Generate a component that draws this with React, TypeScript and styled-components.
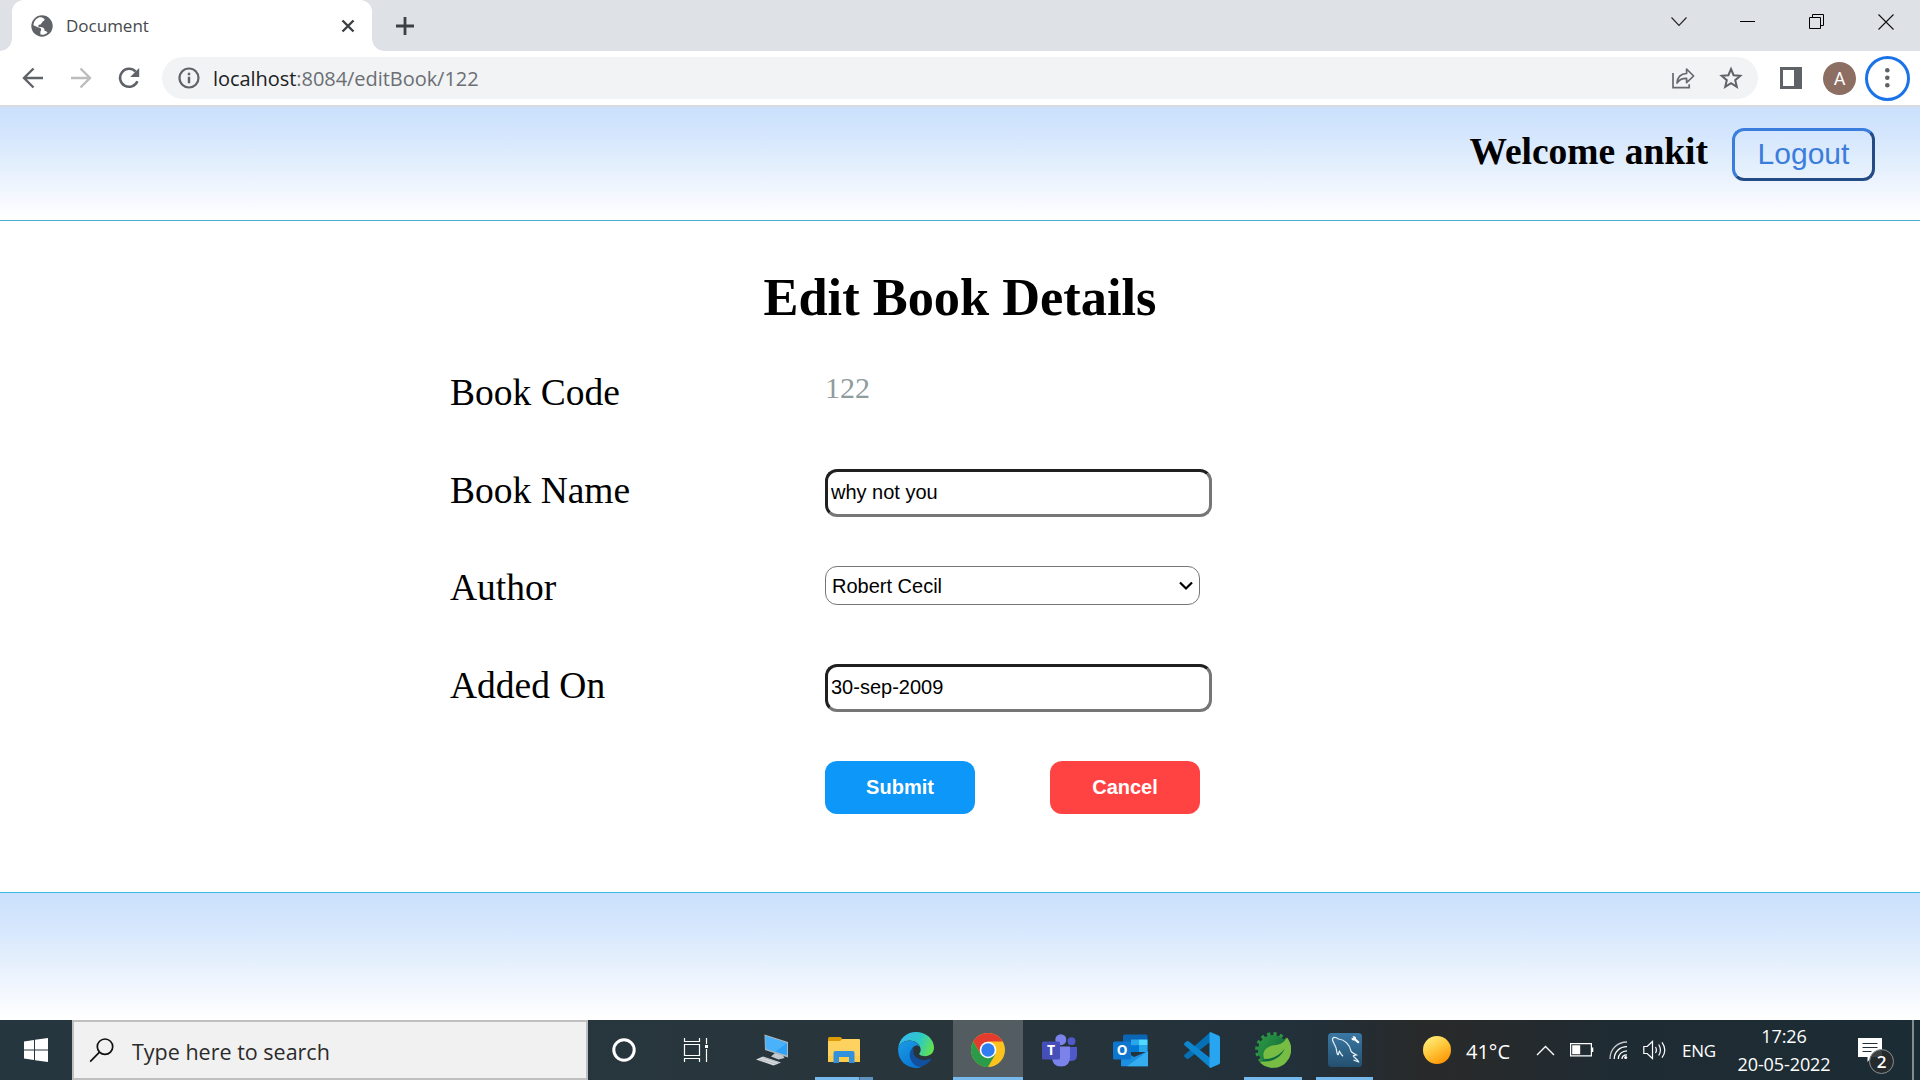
import React from "react";
import styled, { createGlobalStyle, css } from "styled-components";

const ui = `"Open Sans", "Noto Sans", sans-serif`;
const arial = `"Liberation Sans", Arial, sans-serif`;
const times = `"Liberation Serif", "Times New Roman", serif`;

const GlobalStyle = createGlobalStyle`
  *, *::before, *::after { box-sizing: border-box; }
  body { margin: 0; background: #fff; overflow: hidden; }
  svg { display: block; flex: none; }
`;

const Screen = styled.div`
  width: 1920px;
  height: 1080px;
  display: flex;
  flex-direction: column;
  overflow: hidden;
`;

/* ---------- browser chrome ---------- */
const TabStrip = styled.div`
  height: 51px;
  display: flex;
  justify-content: space-between;
  background: #dee1e6;
`;
const TabSide = styled.div`
  display: flex;
  align-items: center;
`;
const Tab = styled.div`
  position: relative;
  width: 360px;
  height: 51px;
  margin-left: 12px;
  padding: 0 17px 0 19px;
  display: flex;
  align-items: center;
  background: #fff;
  border-radius: 12px 12px 0 0;
  &::before, &::after {
    content: "";
    position: absolute;
    bottom: 0;
    width: 12px;
    height: 12px;
  }
  &::before { left: -12px; background: radial-gradient(circle at 0 0, transparent 11.5px, #fff 12px); }
  &::after { right: -12px; background: radial-gradient(circle at 100% 0, transparent 11.5px, #fff 12px); }
`;
const TabTitle = styled.span`
  flex: 1;
  margin-left: 13px;
  font: 17px/24px ${ui};
  color: #45494d;
`;
const NewTab = styled.div`
  margin-left: 24px;
`;
const WindowButtons = styled.div`
  display: flex;
  height: 43px;
`;
const WindowButton = styled.div`
  width: 69px;
  display: flex;
  align-items: center;
  justify-content: center;
`;
const Toolbar = styled.div`
  height: 56px;
  padding: 0 9px 0 21px;
  display: flex;
  align-items: center;
  background: #fff;
  border-bottom: 2px solid #dadbdd;
`;
const NavButtons = styled.div`
  display: flex;
  gap: 24px;
`;
const Omnibox = styled.div`
  width: 1596px;
  height: 42px;
  margin-left: 21px;
  padding: 0 15px 0 16px;
  display: flex;
  align-items: center;
  border-radius: 21px;
  background: #f1f3f4;
`;
const Url = styled.span`
  flex: 1;
  margin-left: 13px;
  padding-top: 1px;
  font: 20px/28px ${ui};
  letter-spacing: -0.05px;
  color: #6b6f74;
  b { font-weight: 400; color: #202124; }
`;
const OmniActions = styled.div`
  display: flex;
  align-items: center;
  gap: 24px;
`;
const Avatar = styled.div`
  width: 33px;
  height: 33px;
  margin-left: 21px;
  border-radius: 50%;
  background: #8d6e63;
  color: #fff;
  font: 18px/34px Roboto, sans-serif;
  text-align: center;
`;
const MenuButton = styled.div`
  width: 45px;
  height: 45px;
  margin-left: 9px;
  border: 3px solid #1a73e8;
  border-radius: 50%;
  display: grid;
  place-items: center;
`;
const PanelSlot = styled.div`
  margin-left: 22px;
`;

/* ---------- web page ---------- */
const fade = css`
  background: linear-gradient(#cae0fc, #d6e7fd 27%, #e3effc 52%, #eff5fe 70%, #fff);
`;
const PageHeader = styled.header`
  height: 114px;
  padding: 21px 45px 0 0;
  display: flex;
  justify-content: flex-end;
  align-items: flex-start;
  gap: 24px;
  border-bottom: 1px solid #4aabd2;
  ${fade}
`;
const Welcome = styled.div`
  margin-top: 2px;
  font: bold 37.5px/43px ${times};
  color: #000;
`;
const Logout = styled.button`
  width: 143px;
  height: 53px;
  padding: 0 0 2px;
  border: 3px solid;
  border-color: #3b7ddd #234b85 #234b85 #3b7ddd;
  border-radius: 12px;
  background: transparent;
  font: 30px/44px ${arial};
  color: #3b7ddd;
`;
const Main = styled.main`
  height: 671px;
  padding-top: 46px;
  background: #fff;
`;
const Title = styled.h1`
  margin: 0;
  font: bold 52.4px/60px ${times};
  text-align: center;
  color: #000;
`;
const Form = styled.div`
  margin: 44px 0 0 450px;
  display: grid;
  grid-template-columns: 375px 387px;
  grid-auto-rows: 97.5px;
  align-items: start;
`;
const Label = styled.label`
  font: 37.5px/43px ${times};
  color: #000;
`;
const Code = styled.span`
  font: 30px/34px ${times};
  color: #8f9c9e;
`;
const TextInput = styled.input`
  width: 387px;
  height: 48px;
  padding: 0 3px;
  border: 3px solid;
  border-color: #202020 #767676 #767676 #202020;
  border-radius: 12px;
  background: #fff;
  font: 20px ${arial};
  color: #000;
  outline: 0;
`;
const SelectBox = styled.div`
  width: 375px;
  height: 39px;
  padding: 1px 6px 0 6px;
  display: flex;
  align-items: center;
  justify-content: space-between;
  border: 1px solid #767676;
  border-radius: 12px;
  font: 20px ${arial};
  color: #000;
`;
const Actions = styled.div`
  grid-column: 2;
  display: flex;
  gap: 75px;
`;
const ActionButton = styled.button<{ $color: string }>`
  width: 150px;
  height: 53px;
  padding: 0;
  border: 0;
  border-radius: 12px;
  background: ${(p) => p.$color};
  color: #fff;
  font: bold 20px ${arial};
`;
const PageFooter = styled.footer`
  height: 128px;
  border-top: 1px solid #3dbbe8;
  ${fade}
`;

/* ---------- taskbar ---------- */
const Taskbar = styled.div`
  height: 60px;
  display: flex;
  background: linear-gradient(90deg, #26363f, #28353b 50%, #22303a 68%, #282a2a 74%, #272a2b 77%, #1f2b33 84%, #1c2c34);
  color: #fff;
`;
const Slot = styled.div<{ $w: number; $active?: boolean }>`
  position: relative;
  width: ${(p) => p.$w}px;
  display: flex;
  align-items: center;
  justify-content: center;
  ${(p) => p.$active && css`
    background: #535d61;
    margin: 0 1px;
    border-bottom: 3px solid #76b9ed;
    padding-top: 3px;
  `}
`;
const Running = styled.i<{ $stacked?: boolean }>`
  position: absolute;
  bottom: 0;
  left: 7px;
  right: 7px;
  height: 3px;
  background: ${(p) => (p.$stacked ? "linear-gradient(90deg, #76b9ed 44px, #476c88 44px, #476c88 45px, #5f93bd 45px)" : "#76b9ed")};
`;
const SearchBox = styled.div`
  width: 516px;
  padding-left: 15px;
  display: flex;
  align-items: center;
  border: 2px solid #bfbfbf;
  background: #f1f1f1;
  color: #2b2b2b;
  font: 21.5px/30px ${ui};
`;
const SearchText = styled.span`
  margin: 3px 0 0 18px;
`;
const Apps = styled.div`
  display: flex;
  width: 644px;
  margin-left: 4px;
`;
const Tray = styled.div`
  flex: 1;
  display: flex;
  align-items: center;
  padding-left: 43px;
`;
const Temp = styled.span`
  width: 70px;
  margin: 4px 0 0 15px;
  font: 20px/28px ${ui};
`;
const TrayIcons = styled.div`
  display: flex;
  align-items: center;
  gap: 15px;
`;
const Lang = styled.span`
  width: 52px;
  margin: 1px 0 0 15px;
  font: 17px/24px ${ui};
  letter-spacing: -0.3px;
`;
const Clock = styled.div`
  width: 100px;
  display: flex;
  flex-direction: column;
  align-items: center;
  font: 18px/28px ${ui};
  letter-spacing: -0.1px;
`;
const Notice = styled.div`
  position: relative;
  margin-left: 24px;
  width: 37px;
  height: 24px;
`;
const Badge = styled.span`
  position: absolute;
  left: 11px;
  top: 11px;
  width: 25px;
  height: 25px;
  border: 1px solid #8b9093;
  border-radius: 50%;
  background: rgba(40, 42, 44, 0.9);
  font: 600 17px/23px ${ui};
  text-align: center;
`;
const PeekEdge = styled.div`
  width: 2px;
  height: 60px;
  margin-left: 17px;
  background: #858c90;
`;

const Globe = () => (
  <svg width="22" height="22" viewBox="0 0 22 22">
    <circle cx="11" cy="11" r="10.7" fill="#5f6368" />
    <path d="M7.200 2.800C4.500 4.200 2.600 7 2.400 10.200l4.400 2.100c1.400.5 2.600.2 3.200 1.600.3.9 0 1.800-.6 2.700v3c2.700.5 5.300-.3 7.100-1.900-.6-1.200-1.700-1.700-3-1.900.2-1.800-.6-3.300-2.500-3.600-1.700-.2-3.600.2-3.800-1.200-.1-1.200 1.600-1.400 2.700-1.700 1.500-.4 1.300-1.800 2.400-2.300 1.100-.5 1.700-1.300 1.300-2.800C11.500 2.200 9.200 2 7.200 2.800z" fill="#fff" />
    <path d="M14 4.300c-.2 1.200-1.100 1.600-2.200 2.200-.8.5-.7 1.800-1.900 2.200 1.800 1.700 4.300.4 6.200 2.100.9.900 1 2 .9 3.200l2.600-.5C20.700 9.300 18.600 5.300 14 4.300z" fill="#5f6368" />
  </svg>
);
const Stroke = ({ w, h, d, color = "#5f6368", sw = 2.4 }: { w: number; h: number; d: string; color?: string; sw?: number }) => (
  <svg width={w} height={h} viewBox={`0 0 ${w} ${h}`} fill="none" stroke={color} strokeWidth={sw}>
    <path d={d} />
  </svg>
);
const Reload = () => (
  <svg width="24" height="24" viewBox="0 0 24 24">
    <path d="M20.400 15.200A9 9 0 1 1 18.600 5.600" fill="none" stroke="#5f6368" strokeWidth="2.5" />
    <path d="M22.200 2v9h-9z" fill="#5f6368" />
  </svg>
);
const Info = () => (
  <svg width="22" height="22" viewBox="0 0 22 22">
    <circle cx="11" cy="11" r="9.5" fill="none" stroke="#5f6368" strokeWidth="2.2" />
    <path d="M9.800 9.800h2.400v6.400H9.800zM9.800 5.800h2.400v2.400H9.800z" fill="#5f6368" />
  </svg>
);
const Share = () => (
  <svg width="24" height="24" viewBox="0 0 24 24" fill="none" stroke="#66696e" strokeWidth="1.7">
    <path d="M2 7v14.600h16.200v-3.400" />
    <path d="M6 17c.4-6 3.500-9.200 9.600-9.500V3l7 7-7 6.700v-4.400C11 12.200 8.200 13.500 6 17z" strokeLinejoin="round" />
  </svg>
);
const Star = () => (
  <svg width="24" height="24" viewBox="0 0 24 24">
    <path d="M12 3l2.600 6.200 6.700.6-5.100 4.400 1.600 6.600L12 17.200l-5.800 3.600 1.600-6.600L2.700 9.800l6.700-.6z" fill="none" stroke="#5f6368" strokeWidth="2" />
  </svg>
);
const SidePanel = () => (
  <svg width="22" height="22" viewBox="0 0 22 22">
    <path d="M0 0h22v22H0z" fill="#5f6368" />
    <path d="M3 3h11v16H3z" fill="#fff" />
  </svg>
);
const Dots = () => (
  <svg width="5" height="24" viewBox="0 0 5 24" fill="#5f6368">
    <circle cx="2.3" cy="4.2" r="2.3" />
    <circle cx="2.3" cy="11.8" r="2.3" />
    <circle cx="2.3" cy="19.3" r="2.3" />
  </svg>
);
const Restore = () => (
  <svg width="16" height="16" viewBox="0 0 16 16" fill="none" stroke="#000">
    <path d="M.5 3.500h11v11H.5zM3.500 3.500v-3h11v11h-3" />
  </svg>
);

const WindowsLogo = () => (
  <svg width="24" height="24" viewBox="0 0 24 24" fill="#fff">
    <path d="M0 3.400l10-1.400v9.500H0zM11 1.800L24 0v11.500H11zM0 12.500h10V22L0 20.600zM11 12.500h13V24l-13-1.800z" />
  </svg>
);
const Magnifier = () => (
  <svg width="25" height="25" viewBox="0 0 25 25" fill="none" stroke="#111" strokeWidth="1.7">
    <circle cx="16" cy="8.7" r="7.7" />
    <path d="M10.500 14.200L1.200 23.700" />
  </svg>
);
const TaskView = () => (
  <svg width="26" height="25" viewBox="0 0 26 25" fill="none" stroke="#fff" strokeWidth="1.2">
    <path d="M1.500 0v3.500h15V0M1.500 24v-3.500h15V24M1.500 6.500h15v11h-15zM23.500 0v6M23.500 11v13" />
    <path d="M22 7h3v3h-3z" fill="#fff" stroke="none" />
  </svg>
);
const ThisPc = () => (
  <svg width="32" height="32" viewBox="0 0 32 32">
    <path d="M8.500.5L32 8v15.500L9 16z" fill="#aeb9c1" />
    <path d="M9.500 2L31 9v12.500L9.800 14.800z" fill="#2ea3f7" />
    <path d="M10 2l21 7-12 9-9-3z" fill="#55b8fb" opacity=".7" />
    <path d="M19 19l8 2.500 1.500 2.500-6 1.500L15 22.500z" fill="#c3c9ce" />
    <path d="M7 22.500l18 6-7.500 2.900L0 25.500z" fill="#d9dde1" />
    <path d="M3.500 25.200l17 5M6.500 23.600l17 5.200" stroke="#a7adb3" strokeWidth=".7" />
  </svg>
);
const Explorer = () => (
  <svg width="32" height="28" viewBox="0 0 32 28">
    <path d="M0 2.500Q0 1 1.500 1h11l2.500 2.500-2 3H0z" fill="#dd9b06" />
    <path d="M0 5h12l2.500-2H31q1 0 1 1v22H0z" fill="#fdd25f" />
    <path d="M0 20h32v6H0z" fill="#fbc63b" opacity=".6" />
    <path d="M5.500 27V17q0-2 2-2h17q2 0 2 2v10H21v-6H11v6z" fill="#3191dd" />
  </svg>
);
const Edge = () => (
  <svg width="36" height="36" viewBox="0 0 36 36">
    <defs>
      <linearGradient id="edgeTop" x1="0" y1="0.3" x2="1" y2="0.6">
        <stop offset="0" stopColor="#35b8f1" />
        <stop offset=".55" stopColor="#2dc8c8" />
        <stop offset="1" stopColor="#63e34c" />
      </linearGradient>
      <linearGradient id="edgeLeft" x1="0" y1="0" x2=".6" y2="1">
        <stop offset="0" stopColor="#1a9be5" />
        <stop offset="1" stopColor="#0a78d4" />
      </linearGradient>
    </defs>
    <path d="M.2 16C1.500 6 9 0 18 0c10 0 18 7 18 15.800 0 5.200-4 8.400-9 8.400-3.600 0-6-1.200-5.700-2.600 1-1.400 1.600-2.600 1.300-4.600C22 12 17 8.500 11.500 8.500 6 8.500 2 11.500.2 16z" fill="url(#edgeTop)" />
    <path d="M.2 16C2 11.500 6 8.700 11.500 8.700c5 0 9 2.500 10.600 6.300-1-1.200-2.500-1.800-4.200-1.500-4 1-5.500 6-4 11 1.500 6 6 9.500 10 10.300-2 .9-4 1.200-6 1.200C8 36-1 27.500.2 16z" fill="url(#edgeLeft)" />
    <path d="M14.500 16.500c-5 4-3 13 3 17 5 3.200 12-.5 15.800-6.200.4-.7-.2-1-.8-.7-6 2.900-13.500 1.400-16.300-3.600-1.200-2.200-1.400-4.500-.2-6.800z" fill="#124f9c" />
  </svg>
);
const Chrome = () => (
  <svg width="34" height="34" viewBox="0 0 34 34">
    <circle cx="17" cy="17" r="17" fill="#fcc31e" />
    <path d="M2.280 8.500A17 17 0 0 1 31.720 8.500H17L9.600 21.300z" fill="#e33b2e" />
    <path d="M2.280 8.500A17 17 0 0 0 17 34l7.400-12.800H9.600z" fill="#2a9c49" />
    <circle cx="17" cy="17" r="8.3" fill="#fff" />
    <circle cx="17" cy="17" r="6.7" fill="#2f7df0" />
  </svg>
);
const Teams = () => (
  <svg width="35" height="33" viewBox="0 0 35 33">
    <circle cx="29.5" cy="7.2" r="3.9" fill="#5059c9" />
    <path d="M25 13h10v8.500q0 5.500-6.500 5.500H25z" fill="#5059c9" />
    <circle cx="18.8" cy="5.7" r="5.5" fill="#7b83eb" />
    <path d="M10 12.500h18V23q0 9.500-9 9.500T10 23z" fill="#7b83eb" />
    <rect x="0" y="7.5" width="18" height="18" rx="1.5" fill="#464eb8" />
    <text x="9" y="21.3" fontFamily="Open Sans" fontWeight="700" fontSize="14" textAnchor="middle" fill="#fff">T</text>
  </svg>
);
const Outlook = () => (
  <svg width="35" height="33" viewBox="0 0 35 33">
    <path d="M10 2Q10 .5 11.500.5H33q1.500 0 1.500 1.500v14H10z" fill="#0a65b5" />
    <path d="M18 5.500h8v6h-8z" fill="#28a8ea" />
    <path d="M26 5.500h8.500v6H26z" fill="#50d9ff" />
    <path d="M18 11.500h8V18h-8z" fill="#0078d4" />
    <path d="M26 11.500h8.500V18H26z" fill="#28a8ea" />
    <path d="M8 15l13 8 14-6v15.300H8z" fill="#1b8fe0" />
    <path d="M35 17L14 32.300h21z" fill="#35aef0" />
    <rect x="0" y="7.5" width="18" height="18" rx="1.5" fill="#0f76cf" />
    <text x="9" y="21.3" fontFamily="Open Sans" fontWeight="700" fontSize="13.5" textAnchor="middle" fill="#fff">O</text>
  </svg>
);
const VsCode = () => (
  <svg width="36" height="36" viewBox="0 0 36 36">
    <path d="M26.500 0v9.800L4.500 26.700q-1.200.8-2.300-.1L.6 25q-1.100-1.200 0-2.300z" fill="#0570b5" />
    <path d="M26.500 36v-9.800L4.500 9.300Q3.300 8.500 2.200 9.400L.6 11q-1.100 1.200 0 2.300z" fill="#0e86cf" />
    <path d="M26.500 0L35 3.800q1 .5 1 1.600v25.200q0 1.100-1 1.600L26.500 36q-1-.2-1-1.500v-33Q25.500.2 26.500 0z" fill="#27a5f0" />
  </svg>
);
const Spring = () => (
  <svg width="36" height="36" viewBox="0 0 36 36">
    <defs>
      <linearGradient id="springGear" x1="0" y1="0" x2="1" y2=".6">
        <stop offset="0" stopColor="#2f9a44" />
        <stop offset="1" stopColor="#0d6b3a" />
      </linearGradient>
    </defs>
    <circle cx="18" cy="18" r="15" fill="url(#springGear)" />
    <circle cx="18" cy="18" r="16.2" fill="none" stroke="#2c9343" strokeWidth="3.4" strokeDasharray="3.2 3.16" />
    <path d="M32 5.500C37.500 12 37.800 22 32 29.200 25.500 37.500 12.500 38 5 30.500l4.500-3.200C6 20 11 14.200 19 13.300c6-.6 10.500-2.600 13-7.800z" fill="#77bc43" />
    <path d="M6 29.300c10 1.500 20-3.300 23.500-12.500-4 6-10.500 9.800-19.500 10.300z" fill="#0b6b3d" />
  </svg>
);
const MySql = () => (
  <svg width="34" height="34" viewBox="0 0 34 34">
    <defs>
      <linearGradient id="mysqlTile" x1="0" y1="0" x2="0" y2="1">
        <stop offset="0" stopColor="#3a78a4" />
        <stop offset="1" stopColor="#24506f" />
      </linearGradient>
    </defs>
    <rect width="34" height="34" rx="3.5" fill="url(#mysqlTile)" />
    <path d="M10 22c-2-2.500-.8-5-2.500-8.500C6 10 4 8 4.500 5.500c1.500-2 4.500-.5 6 .5 6 .5 11 5 12.500 12 .8 2 2.500 2 5.500 4-2 .3-3.300.3-3.300 1 1.500 2 4 3 5.800 6.500M10 22c.8-1 .5-2.500 1.500-3.800 1 2 1.500 3.200 3.500 5M25.500 27l4.500 1.800" fill="none" stroke="#e9f1f6" strokeWidth="1.2" />
    <path d="M24.500 3.500c2-1 4 .5 3.500 2.200l3.500 3.200-1.300 1.600-3.700-3c-2 .5-3.500-1-2.800-2.700l2 .7z" fill="#fff" />
  </svg>
);
const Sun = () => (
  <svg width="28" height="28" viewBox="0 0 28 28">
    <defs>
      <linearGradient id="sunFill" x1=".2" y1=".1" x2=".75" y2="1">
        <stop offset="0" stopColor="#ffe873" />
        <stop offset=".45" stopColor="#ffc63a" />
        <stop offset="1" stopColor="#ff9100" />
      </linearGradient>
    </defs>
    <circle cx="14" cy="14" r="14" fill="url(#sunFill)" />
  </svg>
);
const Battery = () => (
  <svg width="24" height="14" viewBox="0 0 24 14">
    <path d="M.6 .6h20.800v12.300H.6z" fill="none" stroke="#fff" strokeWidth="1.2" />
    <path d="M2.200 2.300h8v9h-8zM22 4.500h1.300v4.500H22z" fill="#fff" />
  </svg>
);
const Wifi = () => (
  <svg width="19" height="19" viewBox="0 0 19 19" fill="none" stroke="#fff" strokeWidth="1.3">
    <path d="M1 18C1 8 8.500 1 18 1" opacity=".75" />
    <path d="M5.200 18C5.200 11 10.500 5.600 18 5.600M9.300 18c0-4.700 3.800-8.200 8.700-8.200M13 18c0-2.500 2-4.200 5-4.200" />
    <circle cx="16.7" cy="16.5" r="1.5" fill="#fff" stroke="none" />
  </svg>
);
const Volume = () => (
  <svg width="24" height="20" viewBox="0 0 24 20" fill="none" stroke="#fff" strokeWidth="1.2">
    <path d="M.8 6.500h3.400L9.500 1.500v17l-5.300-5H.8zM12.500 7q1.800 3 0 6M15.700 4.500q3.500 5.500 0 11M19 2.300q5.600 7.700 0 15.400" />
  </svg>
);
const Bubble = () => (
  <svg width="24" height="25" viewBox="0 0 24 25">
    <path d="M0 0h24v19H13.500L9.500 24V19H0z" fill="#fff" />
    <path d="M4.500 5.500h15M4.500 9.500h15M4.500 13.500h9" stroke="#24313a" strokeWidth="1.2" />
  </svg>
);

export default function App() {
  return (
    <Screen>
      <GlobalStyle />
      <TabStrip>
        <TabSide>
          <Tab>
            <Globe />
            <TabTitle>Document</TabTitle>
            <Stroke w={14} h={14} d="M1.500 1.500l11 11M12.500 1.500l-11 11" color="#3c4043" />
          </Tab>
          <NewTab>
            <Stroke w={18} h={18} d="M9 0v18M0 9h18" color="#3c4043" sw={2.8} />
          </NewTab>
        </TabSide>
        <WindowButtons>
          <WindowButton><Stroke w={16} h={10} d="M.5 .5l7.500 8 7.500-8" color="#222" sw={1.1} /></WindowButton>
          <WindowButton><Stroke w={15} h={1} d="M0 .5h15" color="#000" sw={1} /></WindowButton>
          <WindowButton><Restore /></WindowButton>
          <WindowButton><Stroke w={16} h={16} d="M.5 .5l15 15M15.500 .5l-15 15" color="#111" sw={1.1} /></WindowButton>
        </WindowButtons>
      </TabStrip>
      <Toolbar>
        <NavButtons>
          <Stroke w={24} h={24} d="M22 12H3.500M12.500 2.500L3 12l9.500 9.500" />
          <Stroke w={24} h={24} d="M2 12h18.500M11.500 2.500L21 12l-9.500 9.500" color="#babcbe" />
          <Reload />
        </NavButtons>
        <Omnibox>
          <Info />
          <Url><b>localhost</b>:8084/editBook/122</Url>
          <OmniActions>
            <Share />
            <Star />
          </OmniActions>
        </Omnibox>
        <PanelSlot><SidePanel /></PanelSlot>
        <Avatar>A</Avatar>
        <MenuButton><Dots /></MenuButton>
      </Toolbar>

      <PageHeader>
        <Welcome>Welcome ankit</Welcome>
        <Logout>Logout</Logout>
      </PageHeader>
      <Main>
        <Title>Edit Book Details</Title>
        <Form>
          <Label>Book Code</Label>
          <Code>122</Code>
          <Label>Book Name</Label>
          <TextInput defaultValue="why not you" />
          <Label>Author</Label>
          <SelectBox>
            Robert Cecil
            <Stroke w={14} h={10} d="M1 1.500l6 6 6-6" color="#000" sw={2.2} />
          </SelectBox>
          <Label>Added On</Label>
          <TextInput defaultValue="30-sep-2009" />
          <Actions>
            <ActionButton $color="#0d97f8">Submit</ActionButton>
            <ActionButton $color="#ff4343">Cancel</ActionButton>
          </Actions>
        </Form>
      </Main>
      <PageFooter />

      <Taskbar>
        <Slot $w={72}><WindowsLogo /></Slot>
        <SearchBox>
          <Magnifier />
          <SearchText>Type here to search</SearchText>
        </SearchBox>
        <Slot $w={72}>
          <svg width="24" height="24" viewBox="0 0 24 24"><circle cx="12" cy="12" r="10.2" fill="none" stroke="#fff" strokeWidth="3" /></svg>
        </Slot>
        <Slot $w={72}><TaskView /></Slot>
        <Apps>
          <Slot $w={72}><ThisPc /></Slot>
          <Slot $w={72}><Explorer /><Running $stacked /></Slot>
          <Slot $w={72}><Edge /></Slot>
          <Slot $w={70} $active><Chrome /></Slot>
          <Slot $w={71}><Teams /></Slot>
          <Slot $w={71}><Outlook /></Slot>
          <Slot $w={71}><VsCode /></Slot>
          <Slot $w={72}><Spring /><Running /></Slot>
          <Slot $w={71}><MySql /><Running /></Slot>
        </Apps>
        <Tray>
          <Sun />
          <Temp>41°C</Temp>
          <TrayIcons>
            <Stroke w={19} h={11} d="M1 10l8.500-8.500L18 10" color="#fff" sw={1.4} />
            <Battery />
            <Wifi />
            <Volume />
          </TrayIcons>
          <Lang>ENG</Lang>
          <Clock>
            <span>17:26</span>
            <span>20-05-2022</span>
          </Clock>
          <Notice>
            <Bubble />
            <Badge>2</Badge>
          </Notice>
          <PeekEdge />
        </Tray>
      </Taskbar>
    </Screen>
  );
}
